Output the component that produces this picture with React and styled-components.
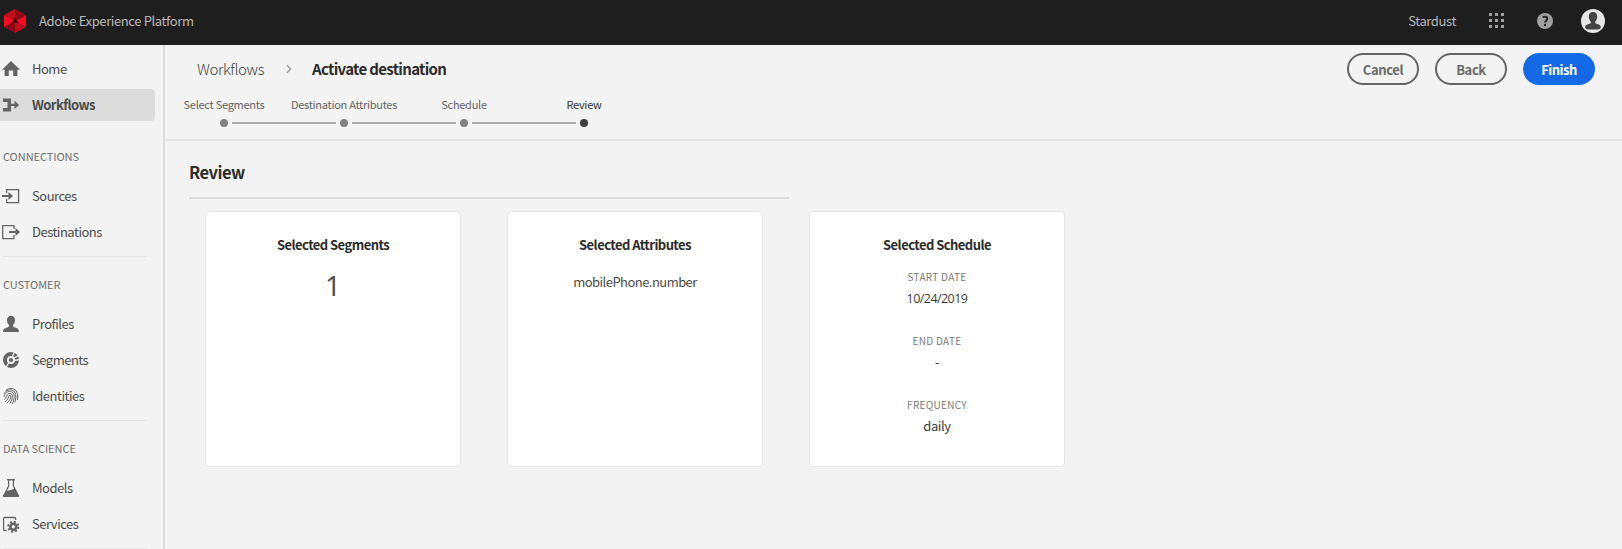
import React from 'react';
import styled, { createGlobalStyle } from 'styled-components';

const Global = createGlobalStyle`
  *, *::before, *::after { box-sizing: border-box; }
  body { margin: 0; background: #f3f3f3; color: #4b4b4b; overflow: hidden;
    font-family: "Noto Sans CJK SC", "Noto Sans", sans-serif; font-size: 13px; }
`;
const Page = styled.div`display: flex; flex-direction: column; height: 549px; overflow: hidden;`;
const TopBar = styled.header`
  display: flex; align-items: center; flex: 0 0 45px; height: 45px;
  padding: 0 17px 4px 4px; background: #1e1e1e; color: #b9b9b9;
`;
const Txt = styled.span`
  display: block; white-space: nowrap; line-height: ${p => p.$lh || 20}px;
  margin-top: ${p => p.$mt || 0}px;
  font-size: ${p => p.$size || 13}px; font-weight: ${p => p.$weight || 400};
  letter-spacing: ${p => p.$ls ?? -0.38}px; color: ${p => p.$color || 'inherit'};
`;
const NumberTxt = styled(Txt)`font-family: "Open Sans", sans-serif;`;
const Brand = styled.div`display: flex; align-items: center; gap: 13px; flex: 1;`;
const TopTools = styled.div`display: flex; align-items: center;`;
const ToolIcon = styled.div`display: flex; margin-left: ${p => p.$gap}px;`;
const Body = styled.div`display: flex; flex: 1; min-height: 0;`;
const Sidebar = styled.nav`
  display: flex; flex-direction: column; flex: 0 0 165px; padding-top: 8px;
  border-right: 2px solid #dcdcdc; background: #f3f3f3;
`;
const NavItem = styled.div`
  display: flex; align-items: center; gap: 12px; flex: 0 0 32px; width: 155px; margin-bottom: 4px;
  padding-left: 2px; border-radius: 0 4px 4px 0; color: #4b4b4b;
  background: ${p => (p.$active ? '#dcdcdc' : 'transparent')};
  svg { flex: 0 0 18px; }
`;
const SectionTitle = styled.div`
  display: flex; align-items: center; flex: 0 0 32px; padding: 0 0 2px 3px;
  margin: ${p => (p.$first ? 16 : 12)}px 0 7px; color: #6e6e6e;
`;
const Divider = styled.div`flex: 0 0 1px; width: 144px; margin: 4px 0 0 3px; background: #e6e6e6;`;
const Main = styled.main`flex: 1; min-width: 0;`;
const PageHead = styled.div`height: 96px; padding-top: 8px; border-bottom: 2px solid #e6e6e6;`;
const TitleRow = styled.div`
  display: flex; align-items: center; justify-content: space-between; height: 32px; padding: 0 27px 0 32px;
`;
const Crumbs = styled.div`display: flex; align-items: center;`;
const CrumbArrow = styled.div`display: flex; width: 48px; padding-left: 22px;`;
const Actions = styled.div`display: flex; gap: 16px;`;
const Button = styled.button`
  display: flex; align-items: center; justify-content: center; width: 72px; height: 32px; padding: 0;
  border-radius: 16px; font-family: inherit;
  border: 2px solid ${p => (p.$primary ? '#1469e6' : '#646464')};
  background: ${p => (p.$primary ? '#1469e6' : 'transparent')};
  color: ${p => (p.$primary ? '#fff' : '#6a6a6a')};
`;
const Steps = styled.div`display: flex; margin: 9px 0 0 -1px;`;
const Step = styled.div`
  display: flex; flex-direction: column; align-items: center; width: 120px;
  color: ${p => (p.$current ? '#323232' : '#646464')};
`;
const Track = styled.div`display: flex; align-items: center; width: 100%; height: 8px; margin-top: 5px;`;
const Half = styled.div`flex: 1; height: 2px; background: ${p => (p.$on ? '#acacac' : 'transparent')};`;
const Dot = styled.div`
  width: 8px; height: 8px; margin: 0 4px; border-radius: 50%;
  background: ${p => (p.$current ? '#3f3f3f' : '#828282')};
`;
const Content = styled.section`padding: 18px 0 0 24px;`;
const Heading = styled.div`width: 600px; height: 40px; padding-top: 1px; border-bottom: 2px solid #dcdcdc;`;
const Cards = styled.div`display: flex; gap: 46px; padding: 12px 0 0 16px;`;
const Card = styled.article`
  display: flex; flex-direction: column; align-items: center; width: 256px; height: 256px; padding-top: 23px;
  border: 1px solid #e6e6e6; border-radius: 4px; background: #fff;
`;
const CardValue = styled.div`margin-top: ${p => p.$top}px;`;
const Fields = styled.div`display: flex; flex-direction: column; gap: 23px; margin-top: 12px;`;
const Field = styled.div`display: flex; flex-direction: column; align-items: center; height: 41px;`;

const Svg = ({ children, size = 18 }) => (
  <svg width={size} height={size} viewBox={`0 0 ${size} ${size}`} fill="none">{children}</svg>
);
const C = '#646464';
const icons = {
  home: <Svg><path fill={C} d="M9 1 0 9.8h2.6V16h4.2v-5.5h4.4V16h4.2V9.8H18z" /></Svg>,
  flow: <Svg><path fill={C} d="M1 2.500h8V7.700h3.500V4.800l4.700 4.100-4.700 4.100v-3H9v5.500H1V12h4.500V6H1z" /></Svg>,
  source: <Svg><path stroke={C} strokeWidth="1.300" d="M4.600 6V2.600h12v13h-12V12" /><path fill={C} d="M0 8h6.500V5L11 9l-4.500 4v-3H0z" /></Svg>,
  dest: <Svg><path stroke={C} strokeWidth="1.300" d="M12 6V2.600H.7v13H12V12" /><path fill={C} d="M7 8h6.500V5L18 9l-4.500 4v-3H7z" /></Svg>,
  profile: <Svg><path fill={C} d="M9 .8c2.500 0 4 1.700 4 4.400 0 2-.8 3.600-1.900 4.500v1.500c0 .5.400.8 1 1 3.200.8 4.900 1.700 4.900 4.800H1c0-3.100 1.700-4 4.900-4.800.6-.2 1-.5 1-1V9.700C5.800 8.800 5 7.200 5 5.200 5 2.500 6.500.8 9 .8z" /></Svg>,
  segment: <Svg><circle cx="9" cy="9" r="6" stroke={C} strokeWidth="4" /><circle cx="9" cy="9" r="2.100" fill={C} /><path stroke="#f3f3f3" strokeWidth="1.300" d="M10.500 5.500 12.500 .5M12 7l5.500-3M12.500 9.300 18 8.500M6.500 12 4 16.500" /></Svg>,
  finger: <Svg><g stroke={C} strokeWidth="1" strokeLinecap="round"><path d="M4 3.200C6.800.7 11.500.8 14 3.600c1.800 2.300 2 5.500 1.500 9M2.200 6.500C4 2.800 8.500 1.700 11.700 4c2.800 2.300 2.500 6.800 1.300 11M2 9.500C2.500 6.300 5.300 4 8.500 4.500c3.500.7 4.200 4 3.600 7-.3 1.700-.8 3.500-1.600 5M2.500 12.500c2-1.500 1.500-3 2.600-4.700C6.500 5.800 9.700 6 10.300 8.500c.5 2.600-.8 5.600-2.300 7.800M3.500 14.600c2.600-1.800 2.600-4 3.400-5.700.5-1 1.700-.8 1.800.3.100 2.300-1.400 4.800-3.300 6.500" /></g></Svg>,
  model: <Svg><path fill={C} d="M5 0h8v1.500H5z" /><path stroke={C} strokeWidth="1.200" d="M6.600 1v6L1.800 17h14.400L11.400 7V1" /><path fill={C} d="m4 12 4-.8L13.300 9.500 17 16.500c.3.900-.2 1.500-1 1.500H2c-.9 0-1.300-.7-1-1.500z" /></Svg>,
  service: <Svg><path stroke={C} strokeWidth="1.300" d="M4.500 15.500H2.600c-.6 0-1-.4-1-1v-11c0-.6.400-1 1-1h10c.6 0 1 .4 1 1V5" /><circle cx="11.300" cy="11.700" r="3" stroke={C} strokeWidth="2.600" /><circle cx="11.300" cy="11.700" r="5" stroke={C} strokeWidth="2" strokeDasharray="1.960 1.960" /></Svg>,
};

const sections = [
  { items: [['home', 'Home'], ['flow', 'Workflows', true]] },
  { title: 'CONNECTIONS', first: true, items: [['source', 'Sources'], ['dest', 'Destinations']] },
  { title: 'CUSTOMER', items: [['profile', 'Profiles'], ['segment', 'Segments'], ['finger', 'Identities']] },
  { title: 'DATA SCIENCE', items: [['model', 'Models'], ['service', 'Services']] },
];
const steps = ['Select Segments', 'Destination Attributes', 'Schedule', 'Review'];
const schedule = [['START DATE', '10/24/2019'], ['END DATE', '-'], ['FREQUENCY', 'daily']];
const CardTitle = ({ children }) => <Txt $weight={700} $ls={-0.55} $color="#2c2c2c">{children}</Txt>;

export default function App() {
  return (
    <Page>
      <Global />
      <TopBar>
        <Brand>
          <svg width="22" height="24" viewBox="0 0 22 24">
            <path fill="#c40d1c" d="M11 0v12.500L0 6zM11 24V12.500L22 18z" />
            <path fill="#fb0a22" d="M0 6l11 6.500L0 18zM22 6l-11 6.500L22 18z" />
            <path fill="#8d0a16" d="M11 0v12.500L22 6zM0 18l11-5.500V24z" />
            <path fill="#2a0a0d" d="M11 8l1.300 4 2.700 2.300-4-.9-4 .9L9.700 12z" />
          </svg>
          <Txt>Adobe Experience Platform</Txt>
        </Brand>
        <TopTools>
          <Txt>Stardust</Txt>
          <ToolIcon $gap={33}>
            <svg width="15" height="15" viewBox="0 0 15 15" fill="#a0a0a0">
              {[0, 6, 12].map(y => [0, 6, 12].map(x => <rect key={`${x}-${y}`} x={x} y={y} width="3" height="3" />))}
            </svg>
          </ToolIcon>
          <ToolIcon $gap={33}>
            <svg width="16" height="16" viewBox="0 0 16 16">
              <circle cx="8" cy="8" r="8" fill="#a0a0a0" />
              <path d="M5.700 4.300c2-1.300 4.600-.6 4.600 1.500 0 1.900-2.200 1.900-2.200 3.800" fill="none" stroke="#1e1e1e" strokeWidth="1.900" />
              <circle cx="8" cy="12" r="1.200" fill="#1e1e1e" />
            </svg>
          </ToolIcon>
          <ToolIcon $gap={28}>
            <svg width="24" height="24" viewBox="0 0 24 24">
              <circle cx="12" cy="12" r="12" fill="#e6e6e6" />
              <path fill="#444" d="M12 3c2.700 0 4.200 1.900 4.200 4.700 0 2.100-.8 3.700-1.900 4.700v1.500c0 .5.300.7.900.9 2.900.8 5 1.500 4.600 3.800-.2 1-1.400 2-3.200 2H7.400c-1.800 0-3-1-3.200-2-.4-2.300 1.700-3 4.600-3.800.6-.2.900-.4.900-.9v-1.500c-1.100-1-1.900-2.600-1.900-4.700C7.800 4.900 9.300 3 12 3z" />
            </svg>
          </ToolIcon>
        </TopTools>
      </TopBar>
      <Body>
        <Sidebar>
          {sections.map((s, i) => (
            <React.Fragment key={i}>
              {s.title && <SectionTitle $first={s.first}><Txt $size={11} $ls={-0.05}>{s.title}</Txt></SectionTitle>}
              {s.items.map(([icon, label, active]) => (
                <NavItem key={label} $active={active}>
                  {icons[icon]}
                  <Txt $weight={active ? 700 : 400} $ls={active ? -0.58 : -0.5}>{label}</Txt>
                </NavItem>
              ))}
              {s.title && <Divider />}
            </React.Fragment>
          ))}
        </Sidebar>
        <Main>
          <PageHead>
            <TitleRow>
              <Crumbs>
                <Txt $size={15} $weight={300} $ls={-0.4} $color="#3f3f3f">Workflows</Txt>
                <CrumbArrow><svg width="6" height="10" viewBox="0 0 6 10"><path d="M1 1.200 4.600 5 1 8.800" fill="none" stroke="#9a9a9a" strokeWidth="1.300" /></svg></CrumbArrow>
                <Txt $size={15} $weight={700} $ls={-0.67} $color="#2c2c2c">Activate destination</Txt>
              </Crumbs>
              <Actions>
                <Button><Txt $mt={1} $weight={700}>Cancel</Txt></Button>
                <Button><Txt $mt={1} $weight={700}>Back</Txt></Button>
                <Button $primary><Txt $mt={1} $weight={700} $ls={-0.5}>Finish</Txt></Button>
              </Actions>
            </TitleRow>
            <Steps>
              {steps.map((s, i) => (
                <Step key={s} $current={i === 3}>
                  <Txt $size={11} $ls={-0.27}>{s}</Txt>
                  <Track><Half $on={i > 0} /><Dot $current={i === 3} /><Half $on={i < 3} /></Track>
                </Step>
              ))}
            </Steps>
          </PageHead>
          <Content>
            <Heading><Txt $size={16.5} $weight={700} $ls={-0.5} $lh={24} $color="#2c2c2c">Review</Txt></Heading>
            <Cards>
              <Card>
                <CardTitle>Selected Segments</CardTitle>
                <CardValue $top={14}><NumberTxt $size={28} $ls={0} $lh={32}>1</NumberTxt></CardValue>
              </Card>
              <Card>
                <CardTitle>Selected Attributes</CardTitle>
                <CardValue $top={17}><Txt $ls={-0.54}>mobilePhone.number</Txt></CardValue>
              </Card>
              <Card>
                <CardTitle>Selected Schedule</CardTitle>
                <Fields>
                  {schedule.map(([k, v], i) => (
                    <Field key={k}>
                      <Txt $size={10} $ls={0.3} $color="#7a7a7a">{k}</Txt>
                      {i === 0
                        ? <NumberTxt $mt={2} $size={12.5} $ls={-0.55} $color="#3c3c3c">{v}</NumberTxt>
                        : <Txt $mt={1} $color="#3c3c3c">{v}</Txt>}
                    </Field>
                  ))}
                </Fields>
              </Card>
            </Cards>
          </Content>
        </Main>
      </Body>
    </Page>
  );
}
